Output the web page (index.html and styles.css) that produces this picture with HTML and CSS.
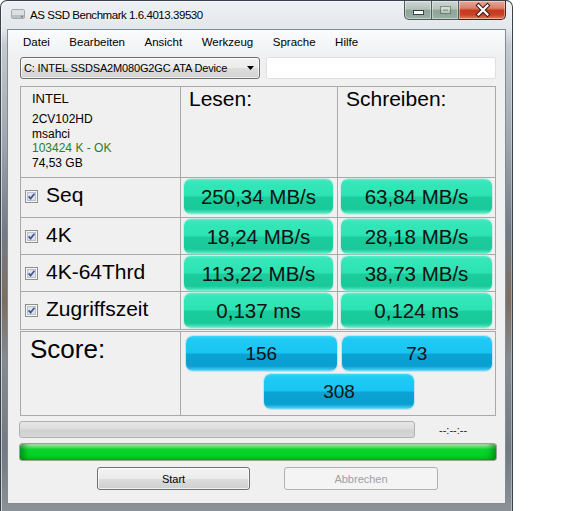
FILE: index.html
```html
<!DOCTYPE html>
<html lang="de">
<head>
<meta charset="utf-8">
<title>AS SSD Benchmark</title>
<link rel="stylesheet" href="styles.css">
</head>
<body>
<div class="window">
  <div class="titlebar">
    <svg class="app-icon" width="16" height="14" viewBox="0 0 16 14">
      <rect x="1.5" y="2.5" width="13" height="9" rx="1" fill="#dcdfe2" stroke="#a3a9ae"/>
      <rect x="2" y="8" width="12" height="3" fill="#b9bec3"/>
      <circle cx="12" cy="9.5" r="0.9" fill="#6d747a"/>
    </svg>
    <span class="title">AS SSD Benchmark 1.6.4013.39530</span>
    <div class="caption">
      <div class="cap cap-min">
        <svg width="26" height="18" viewBox="0 0 26 18">
          <rect x="8.5" y="9.5" width="10" height="4" fill="#fff" stroke="#33404a"/>
        </svg>
      </div>
      <div class="cap cap-max">
        <svg width="26" height="18" viewBox="0 0 26 18">
          <rect x="8.5" y="5.5" width="10" height="7" fill="none" stroke="rgba(60,75,70,0.45)" stroke-width="1"/>
          <rect x="10" y="7" width="7" height="4" fill="none" stroke="rgba(255,255,255,0.55)" stroke-width="1.4"/>
        </svg>
      </div>
      <div class="cap cap-close">
        <svg width="46" height="18" viewBox="0 0 46 18">
          <path d="M19.5 4.5 L28.5 13.5 M28.5 4.5 L19.5 13.5" stroke="#3b1a12" stroke-width="4.2" stroke-linecap="square"/>
          <path d="M19.5 4.5 L28.5 13.5 M28.5 4.5 L19.5 13.5" stroke="#fff" stroke-width="2.2" stroke-linecap="square"/>
        </svg>
      </div>
    </div>
  </div>

  <div class="client">
    <nav class="menubar">
      <span>Datei</span>
      <span>Bearbeiten</span>
      <span>Ansicht</span>
      <span>Werkzeug</span>
      <span>Sprache</span>
      <span>Hilfe</span>
    </nav>

    <div class="drive-row">
      <div class="combo">
        <span>C: INTEL SSDSA2M080G2GC ATA Device</span>
        <svg class="combo-arrow" width="7" height="4" viewBox="0 0 7 4"><path d="M0 0 H7 L3.5 4 Z" fill="#000"/></svg>
      </div>
      <div class="textbox"></div>
    </div>

    <div class="results">
      <div class="cell info">
        <div class="vendor">INTEL</div>
        <div class="info-lines">
          <div>2CV102HD</div>
          <div>msahci</div>
          <div class="ok">103424 K - OK</div>
          <div>74,53 GB</div>
        </div>
      </div>
      <div class="cell head">Lesen:</div>
      <div class="cell head">Schreiben:</div>

      <div class="cell label">
        <svg class="check" width="13" height="13" viewBox="0 0 13 13"><rect x="0.5" y="0.5" width="12" height="12" fill="#f6f6f6" stroke="#8e8f8f"/><rect x="2.5" y="2.5" width="8" height="8" fill="#dfe3ea" stroke="#b9c0cb"/><path d="M3.6 6.4 L5.6 8.6 L9.4 3.8" fill="none" stroke="#3d5894" stroke-width="1.7"/></svg>
        <span>Seq</span>
      </div>
      <div class="cell val-cell read"><div class="val">250,34 MB/s</div></div>
      <div class="cell val-cell write"><div class="val">63,84 MB/s</div></div>

      <div class="cell label">
        <svg class="check" width="13" height="13" viewBox="0 0 13 13"><rect x="0.5" y="0.5" width="12" height="12" fill="#f6f6f6" stroke="#8e8f8f"/><rect x="2.5" y="2.5" width="8" height="8" fill="#dfe3ea" stroke="#b9c0cb"/><path d="M3.6 6.4 L5.6 8.6 L9.4 3.8" fill="none" stroke="#3d5894" stroke-width="1.7"/></svg>
        <span>4K</span>
      </div>
      <div class="cell val-cell read"><div class="val">18,24 MB/s</div></div>
      <div class="cell val-cell write"><div class="val">28,18 MB/s</div></div>

      <div class="cell label">
        <svg class="check" width="13" height="13" viewBox="0 0 13 13"><rect x="0.5" y="0.5" width="12" height="12" fill="#f6f6f6" stroke="#8e8f8f"/><rect x="2.5" y="2.5" width="8" height="8" fill="#dfe3ea" stroke="#b9c0cb"/><path d="M3.6 6.4 L5.6 8.6 L9.4 3.8" fill="none" stroke="#3d5894" stroke-width="1.7"/></svg>
        <span>4K-64Thrd</span>
      </div>
      <div class="cell val-cell read"><div class="val">113,22 MB/s</div></div>
      <div class="cell val-cell write"><div class="val">38,73 MB/s</div></div>

      <div class="cell label">
        <svg class="check" width="13" height="13" viewBox="0 0 13 13"><rect x="0.5" y="0.5" width="12" height="12" fill="#f6f6f6" stroke="#8e8f8f"/><rect x="2.5" y="2.5" width="8" height="8" fill="#dfe3ea" stroke="#b9c0cb"/><path d="M3.6 6.4 L5.6 8.6 L9.4 3.8" fill="none" stroke="#3d5894" stroke-width="1.7"/></svg>
        <span>Zugriffszeit</span>
      </div>
      <div class="cell val-cell read"><div class="val">0,137 ms</div></div>
      <div class="cell val-cell write"><div class="val">0,124 ms</div></div>
    </div>

    <div class="score">
      <div class="cell score-label">Score:</div>
      <div class="cell score-vals">
        <div class="score-row">
          <div class="sval">156</div>
          <div class="sval">73</div>
        </div>
        <div class="score-row total">
          <div class="sval">308</div>
        </div>
      </div>
    </div>

    <div class="progress-row">
      <div class="progress"></div>
      <span class="timer">--:--:--</span>
    </div>

    <div class="done-bar"></div>

    <div class="buttons">
      <button class="btn" type="button">Start</button>
      <button class="btn" type="button" disabled>Abbrechen</button>
    </div>
  </div>
</div>
</body>
</html>
```

FILE: styles.css
```css
body {
  margin: 0;
  background: #fff;
  font-family: "Liberation Sans", Arial, sans-serif;
  color: #000;
}

/* Aero window frame */
.window {
  width: 513px;
  height: 511px;
  box-sizing: border-box;
  border: 1px solid #39434d;
  border-bottom: 0;
  border-radius: 7px 7px 0 0;
  padding: 0 6px 7px;
  display: flex;
  flex-direction: column;
  background: linear-gradient(to bottom,
    #eef1f4 0px, #e2e7eb 28px, #c3cad0 44px, #9ea7af 140px,
    #737c86 230px, #7c6d60 300px, #868b91 360px, #737982 450px, #8c9298 511px);
  box-shadow: inset 1px 1px 0 rgba(255, 255, 255, 0.6), inset -1px 0 0 rgba(255, 255, 255, 0.35);
}

.titlebar {
  height: 28px;
  flex-shrink: 0;
  display: flex;
  align-items: flex-start;
}

.app-icon {
  flex-shrink: 0;
  margin: 6px 0 0 3px;
}

.title {
  margin: 7px 0 0 4px;
  font-size: 11.5px;
  line-height: 14px;
  letter-spacing: -0.45px;
  white-space: nowrap;
  text-shadow: 0 0 6px rgba(255, 255, 255, 0.95);
}

.caption {
  margin-left: auto;
  display: flex;
  height: 19px;
}

.cap {
  height: 19px;
  box-sizing: border-box;
  border: 1px solid #4d5a62;
  border-top: 0;
  display: flex;
  box-shadow: inset 0 0 0 1px rgba(255, 255, 255, 0.4);
  background: linear-gradient(to bottom, #ccd6d1 0%, #b4c2ba 45%, #8fa497 52%, #9bb0a4 100%);
}

.cap svg {
  display: block;
}

.cap-min {
  width: 28px;
  border-radius: 0 0 0 5px;
}

.cap-max {
  width: 27px;
  border-left: 0;
}

.cap-close {
  width: 47px;
  border-left: 0;
  border-color: #4a2219;
  border-radius: 0 0 5px 0;
  background: linear-gradient(to bottom, #e6a898 0%, #d9806a 40%, #c5391f 52%, #cc4327 78%, #e08262 100%);
}

/* client area */
.client {
  flex: 1;
  min-height: 0;
  border: 1px solid #7f8b96;
  background: #f0f0f0;
  display: flex;
  flex-direction: column;
}

.menubar {
  height: 23px;
  flex-shrink: 0;
  display: flex;
  align-items: center;
  gap: 19.5px;
  padding-left: 15px;
  font-size: 11.5px;
  background: linear-gradient(to bottom, #fafbfc, #f1f2f4);
}

.drive-row {
  display: flex;
  gap: 6px;
  padding: 4px 9px 0 12px;
}

.combo {
  width: 240px;
  height: 22px;
  box-sizing: border-box;
  border: 1px solid #707070;
  border-radius: 3px;
  background: linear-gradient(to bottom, #f3f3f3 0%, #ebebeb 50%, #dedede 50%, #d2d2d2 100%);
  box-shadow: inset 0 0 0 1px rgba(255, 255, 255, 0.65);
  display: flex;
  align-items: center;
  padding: 0 5px 0 3px;
  font-size: 11px;
  letter-spacing: -0.15px;
  white-space: nowrap;
}

.combo-arrow {
  margin-left: auto;
  display: block;
}

.textbox {
  flex: 1;
  height: 22px;
  box-sizing: border-box;
  border: 1px solid #dcdfe4;
  border-radius: 2px;
  background: #fff;
}

/* result table */
.results {
  display: grid;
  grid-template-columns: 159px 156px 157px;
  grid-template-rows: 90px 39px 36px 36px 37px;
  gap: 1px;
  padding: 1px;
  background: #a9a9a9;
  margin: 7px 9px 0 12px;
}

.cell {
  background: #f0f0f0;
  min-width: 0;
}

.info {
  padding: 4px 0 0 11px;
}

.vendor {
  font-size: 13px;
  line-height: 15px;
}

.info-lines {
  margin-top: 6px;
  font-size: 12px;
  line-height: 14.7px;
}

.ok {
  color: #2b7d2b;
}

.head {
  padding-left: 8px;
  font-size: 21px;
  line-height: 24px;
}

.label {
  display: flex;
  align-items: flex-start;
  padding: 4.5px 0 0 4px;
  font-size: 21px;
  line-height: 24px;
}

.check {
  flex-shrink: 0;
  margin: 7px 8px 0 0;
}

.val-cell {
  padding-top: 1px;
}

.val-cell.read {
  padding-left: 3px;
  padding-right: 4px;
}

.val-cell.write {
  padding-left: 3px;
  padding-right: 3px;
}

.val {
  height: 35px;
  border-radius: 7px;
  line-height: 35px;
  text-align: center;
  font-size: 20.5px;
  color: #111;
  background: linear-gradient(to bottom,
    #55efc9 0%, #36e7ba 8%, #2ce3b3 47%, #1bcc9d 53%, #19c99a 86%, #48e0bb 95%, #8df1d6 100%);
  box-shadow: 0 0 0 1px rgba(130, 235, 205, 0.35);
}

/* score panel */
.score {
  display: grid;
  grid-template-columns: 159px 1fr;
  grid-template-rows: 83px;
  gap: 1px;
  padding: 1px;
  background: #a9a9a9;
  margin: 1px 9px 0 12px;
}

.score-label {
  padding: 2px 0 0 9px;
  font-size: 26px;
  line-height: 30px;
}

.score-vals {
  padding: 4px 3px 0 5px;
  display: flex;
  flex-direction: column;
  gap: 3px;
}

.score-row {
  display: flex;
  gap: 5px;
}

.score-row .sval {
  flex: 1;
}

.score-row.total {
  justify-content: center;
}

.score-row.total .sval {
  flex: 0 0 150px;
}

.sval {
  height: 35px;
  border-radius: 7px;
  line-height: 35px;
  text-align: center;
  font-size: 19px;
  color: #111;
  background: linear-gradient(to bottom,
    #3fd6f9 0%, #1fcbf5 8%, #19c4f2 47%, #0aa3d4 53%, #0a9fd0 86%, #33c2eb 95%, #7edcf6 100%);
  box-shadow: 0 0 0 1px rgba(110, 205, 240, 0.35);
}

/* progress area */
.progress-row {
  display: flex;
  align-items: center;
  margin: 5px 0 0 11px;
}

.progress {
  width: 396px;
  height: 17px;
  box-sizing: border-box;
  border: 1px solid #b0b0b0;
  border-radius: 3px;
  background: linear-gradient(to bottom, #e6e6e6 0%, #dcdcdc 45%, #d0d0d0 55%, #d7d7d7 100%);
}

.timer {
  margin-left: 24px;
  font-size: 11px;
  color: #222;
}

.done-bar {
  height: 18px;
  box-sizing: border-box;
  margin: 5px 8px 0 11px;
  border: 1px solid #93a593;
  border-radius: 3px;
  background: linear-gradient(to bottom, #c9f6c9 0%, #74e57f 14%, #0ad52c 34%, #00d025 78%, #00bb20 100%);
  box-shadow: inset 7px 0 6px -3px rgba(0, 90, 10, 0.55), inset -7px 0 6px -3px rgba(0, 90, 10, 0.55);
}

/* buttons */
.buttons {
  display: flex;
  gap: 34px;
  margin: 6px 0 0 89px;
}

.btn {
  width: 153px;
  height: 23px;
  box-sizing: border-box;
  padding: 0;
  border: 1px solid #707070;
  border-radius: 3px;
  background: linear-gradient(to bottom, #f3f3f3 0%, #ebebeb 50%, #dddddd 50%, #cfcfcf 100%);
  box-shadow: inset 0 0 0 1px rgba(255, 255, 255, 0.7);
  font-family: inherit;
  font-size: 11px;
  color: #000;
}

.btn:disabled {
  width: 154px;
  border-color: #adb2b5;
  background: #f4f4f4;
  box-shadow: none;
  color: #a0a0a0;
}
```
